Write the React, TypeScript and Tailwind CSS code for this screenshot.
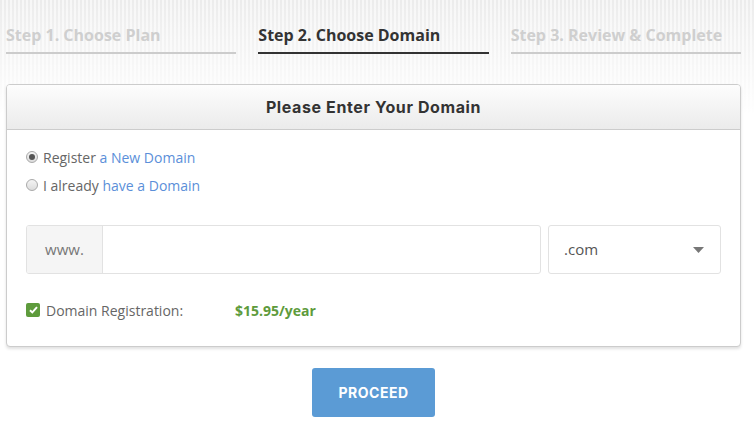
import React, { useState } from 'react';

const steps = [
  { label: 'Step 1. Choose Plan', active: false },
  { label: 'Step 2. Choose Domain', active: true },
  { label: 'Step 3. Review & Complete', active: false },
];

const Radio = ({ checked }: { checked: boolean }) => (
  <span className="w-[12px] h-[12px] rounded-full border border-[#a9a9a9] bg-[linear-gradient(to_bottom,#f4f4f4,#dcdcdc)] flex items-center justify-center shrink-0">
    {checked && <span className="w-[6px] h-[6px] rounded-full bg-[#555]" />}
  </span>
);

export default function App() {
  const [mode, setMode] = useState<'new' | 'own'>('new');
  const [domain, setDomain] = useState('');

  return (
    <div className="min-h-[422px] w-full bg-[linear-gradient(to_bottom,rgba(255,255,255,0)_0px,#fff_115px),repeating-linear-gradient(90deg,#ececec_0px,#ececec_2px,#f7f7f7_2px,#f7f7f7_4px)] font-['Open_Sans',sans-serif] pl-[6px] pr-[13px]">
      {/* Steps */}
      <div className="grid grid-cols-3 gap-[22px] pt-[24px]">
        {steps.map((s) => (
          <div key={s.label} className={`border-b-2 pb-[6px] ${s.active ? 'border-[#333]' : 'border-[#cccccc]'}`}>
            <span className={`block text-[16px] leading-[22px] font-bold ${s.active ? 'text-[#333]' : 'text-[#cfcfcf]'}`}>{s.label}</span>
          </div>
        ))}
      </div>

      {/* Card */}
      <div className="mt-[30px] border border-[#cccccc] rounded-[4px] bg-white shadow-[0_2px_3px_rgba(0,0,0,0.12)] overflow-hidden">
        <div className="h-[45px] border-b border-[#cccccc] bg-[linear-gradient(to_bottom,#fdfdfd,#ebebeb)] flex items-center justify-center">
          <h2 className="text-[16px] font-bold text-[#333] tracking-[0.6px] font-['Inter',sans-serif]">Please Enter Your Domain</h2>
        </div>
        <div className="pt-[17px] px-[19px] pb-[26px]">
          <div className="flex flex-col gap-[8px] text-[14px] text-[#666]">
            <label className="h-[20px] flex items-center gap-[5px] cursor-pointer" onClick={() => setMode('new')}>
              <Radio checked={mode === 'new'} />
              <span>Register <span className="text-[#5b8fd9]">a New Domain</span></span>
            </label>
            <label className="h-[20px] flex items-center gap-[5px] cursor-pointer" onClick={() => setMode('own')}>
              <Radio checked={mode === 'own'} />
              <span>I already <span className="text-[#5b8fd9]">have a Domain</span></span>
            </label>
          </div>

          <div className="mt-[30px] flex gap-[7px] h-[49px]">
            <div className="flex flex-1 border border-[#e2e2e2] rounded-[3px] overflow-hidden">
              <div className="w-[76px] bg-[#f5f5f5] border-r border-[#e2e2e2] flex items-center justify-center text-[15px] text-[#777]">www.</div>
              <input
                value={domain}
                onChange={(e) => setDomain(e.target.value)}
                className="flex-1 outline-none px-3 text-[15px] text-[#555]"
              />
            </div>
            <div className="w-[173px] border border-[#e2e2e2] rounded-[3px] flex items-center justify-between pl-[15px] pr-[16px] text-[15px] text-[#555]">
              <span>.com</span>
              <svg width="11" height="6" viewBox="0 0 11 6"><path d="M0 0h11L5.5 6z" fill="#777" /></svg>
            </div>
          </div>

          <div className="mt-[26px] h-[20px] flex items-center text-[14px]">
            <span className="w-[14px] h-[14px] rounded-[2px] bg-[#5e9b3c] flex items-center justify-center">
              <svg width="9" height="8" viewBox="0 0 9 8"><path d="M1 4.2l2.3 2.2L8 1.2" stroke="#fff" strokeWidth="2" fill="none" /></svg>
            </span>
            <span className="ml-[6px] w-[189px] text-[#666]">Domain Registration:</span>
            <span className="font-bold text-[#5e9b3c]">$15.95/year</span>
          </div>
        </div>
      </div>

      <div className="flex justify-center mt-[21px]">
        <button className="w-[123px] h-[49px] rounded-[3px] bg-[#5b9bd5] text-white text-[14px] font-bold font-['Inter',sans-serif] tracking-[0.5px]">PROCEED</button>
      </div>
    </div>
  );
}
